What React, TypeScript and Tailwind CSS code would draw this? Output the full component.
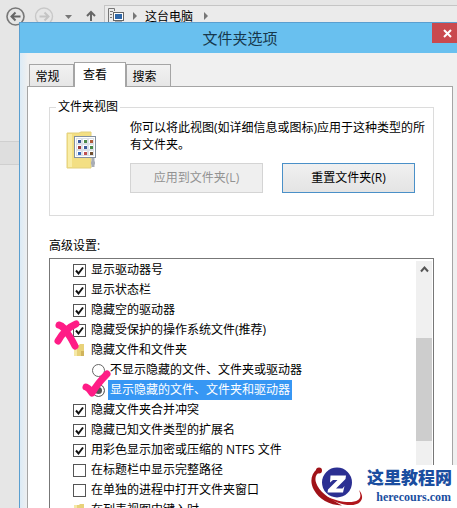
import { useState } from "react";

interface SettingItem {
  id: string;
  label: string;
  kind: "checkbox" | "radio" | "group";
  checked?: boolean;
}

const SETTINGS: SettingItem[] = [
  { id: "drive-letters", label: "显示驱动器号", kind: "checkbox", checked: true },
  { id: "status-bar", label: "显示状态栏", kind: "checkbox", checked: true },
  { id: "empty-drives", label: "隐藏空的驱动器", kind: "checkbox", checked: true },
  { id: "system-files", label: "隐藏受保护的操作系统文件(推荐)", kind: "checkbox", checked: true },
  { id: "hidden-files", label: "隐藏文件和文件夹", kind: "group" },
  { id: "hide", label: "不显示隐藏的文件、文件夹或驱动器", kind: "radio" },
  { id: "show", label: "显示隐藏的文件、文件夹和驱动器", kind: "radio" },
  { id: "merge", label: "隐藏文件夹合并冲突", kind: "checkbox", checked: true },
  { id: "extensions", label: "隐藏已知文件类型的扩展名", kind: "checkbox", checked: true },
  { id: "ntfs", label: "用彩色显示加密或压缩的 NTFS 文件", kind: "checkbox", checked: true },
  { id: "full-path", label: "在标题栏中显示完整路径", kind: "checkbox" },
  { id: "process", label: "在单独的进程中打开文件夹窗口", kind: "checkbox" },
  { id: "typing", label: "在列表视图中键入时", kind: "group" },
];

const TABS = ["常规", "查看", "搜索"];

function ExplorerBar() {
  return (
    <header className="flex h-[22px] items-start">
      <svg width="104" height="28" viewBox="0 0 104 28" fill="none" className="shrink-0">
        <circle cx="15.5" cy="16.5" r="8.5" stroke="#777" strokeWidth="1.6" />
        <path d="M20.5 16.5h-9m4-4-4 4 4 4" stroke="#666" strokeWidth="2" />
        <circle cx="44" cy="16.5" r="8.5" stroke="#c8c8c8" strokeWidth="1.4" />
        <path d="M39.5 16.5h9m-4-4 4 4-4 4" stroke="#c4c4c4" strokeWidth="2" />
        <path d="M65 15h7l-3.5 4z" fill="#777" />
        <path d="M91 21v-9m-4 4 4-4 4 4" stroke="#666" strokeWidth="2" />
      </svg>
      <div className="mt-[5px] flex h-6 grow items-start border-t border-l border-[#c5c5c5] bg-[#ebebeb] pt-px pl-[2px]">
        <svg width="38" height="20" viewBox="0 0 38 20" fill="none" className="shrink-0">
          <path d="M1.5 17V1.500h6V4M1.500 15.500h3M3 4.500h3M3 7.500h2M3 10.500h2" stroke="#777" />
          <rect x="6.500" y="5.500" width="10" height="8" fill="#fff" stroke="#666" />
          <rect x="8" y="7" width="7" height="5" fill="#2f67a8" />
          <path d="M8 15h7" stroke="#666" />
          <path d="M26 5v8l4-4z" fill="#777" />
        </svg>
        <span className="text-xs leading-5 text-black">这台电脑</span>
        <svg width="20" height="20" viewBox="0 0 20 20" className="shrink-0">
          <path d="M11 5v8l4-4z" fill="#777" />
        </svg>
      </div>
    </header>
  );
}

function FolderViewIcon() {
  const colors = ["#3b5a9a", "#4a8a4a", "#b05a3a", "#a03a3a", "#3b5a9a", "#4a8a4a", "#3b6aba", "#c05050", "#705030"];
  return (
    <svg width="34" height="40" viewBox="0 0 34 40" className="shrink-0">
      <path d="M1 2h12l2-1h10v36H1z" fill="#f3df83" stroke="#e3d07c" />
      <path d="M2 3h4v33H2z" fill="#f9eda6" />
      <path d="M27 27v9m-2-4h4" stroke="#a9adb5" strokeWidth="3" />
      <rect x="8.5" y="5.5" width="21" height="21" fill="#fff" stroke="#8290a0" />
      {colors.map((color, i) => (
        <g key={i}>
          <rect x={10.5 + (i % 3) * 6} y={7.5 + Math.floor(i / 3) * 6} width="5" height="5" fill="#fff" stroke="#dbe1e8" />
          <rect x={12 + (i % 3) * 6} y={9 + Math.floor(i / 3) * 6} width="3" height="3" fill={color} />
        </g>
      ))}
    </svg>
  );
}

function FolderViews() {
  return (
    <fieldset className="min-w-0 border border-[#dcdcdc] pb-[22px]">
      <legend className="ml-[6px] px-[2px] text-xs leading-4">文件夹视图</legend>
      <div className="flex pl-4 pr-[7px]">
        <div className="w-16 shrink-0 pt-4">
          <FolderViewIcon />
        </div>
        <div className="min-w-0 grow pt-1">
          <p className="text-xs leading-[17px]">
            你可以将此视图(如详细信息或图标)应用于这种类型的所有文件夹。
          </p>
          <div className="mt-[10px] flex gap-[19px] pr-[11px]">
            <button
              type="button"
              disabled
              className="h-[30px] grow basis-0 border border-[#d4d4d4] bg-[#efefef] text-xs text-[#929292]"
            >
              应用到文件夹(L)
            </button>
            <button
              type="button"
              className="h-[30px] grow basis-0 border border-[#4a90c8] bg-linear-to-b from-[#f0f0f0] to-[#e4e4e4] text-xs"
            >
              重置文件夹(R)
            </button>
          </div>
        </div>
      </div>
    </fieldset>
  );
}

function FolderGlyph() {
  return (
    <svg width="12" height="14" viewBox="0 0 12 14" className="shrink-0">
      <path d="M1 2h5l1-1h4v12H1z" fill="#e8d27a" />
      <path d="M1 2h3v11H1z" fill="#f5e8a6" />
      <path d="M8 8h3v5H8z" fill="#d0b45c" />
    </svg>
  );
}

interface SettingRowProps {
  item: SettingItem;
  checked: boolean;
  onToggle: (item: SettingItem) => void;
}

function SettingRow({ item, checked, onToggle }: SettingRowProps) {
  if (item.kind === "group") {
    return (
      <li className="flex h-5 items-center gap-[6px] pl-[23px]">
        <FolderGlyph />
        <span className="text-xs leading-5">{item.label}</span>
      </li>
    );
  }

  if (item.kind === "radio") {
    return (
      <li className="flex h-5 items-center pl-[42px]">
        <input
          id={item.id}
          type="radio"
          name="hidden-files"
          checked={checked}
          onChange={() => onToggle(item)}
          className="size-[13px] shrink-0 appearance-none rounded-full border border-[#666] bg-white checked:bg-[#555] checked:inset-ring-2 checked:inset-ring-white"
        />
        <label
          htmlFor={item.id}
          className={`ml-[3px] px-[2px] text-xs leading-5 ${checked ? "bg-[#3797f4] text-white" : ""}`}
        >
          {item.label}
        </label>
      </li>
    );
  }

  return (
    <li className="flex h-5 items-center gap-[5px] pl-[23px]">
      <span className="relative flex shrink-0">
        <input
          id={item.id}
          type="checkbox"
          checked={checked}
          onChange={() => onToggle(item)}
          className="size-[13px] appearance-none border border-[#555] bg-white"
        />
        {checked && (
          <svg width="13" height="13" viewBox="0 0 13 13" fill="none" className="pointer-events-none absolute inset-0">
            <path d="M3 6.500 5.500 9.500 10 3.500" stroke="#111" strokeWidth="2" />
          </svg>
        )}
      </span>
      <label htmlFor={item.id} className="text-xs leading-5">
        {item.label}
      </label>
    </li>
  );
}

function AdvancedSettings() {
  const [checkedIds, setCheckedIds] = useState(
    SETTINGS.filter((item) => item.checked).map((item) => item.id)
  );
  const [radioId, setRadioId] = useState("show");

  const toggle = (item: SettingItem) => {
    if (item.kind === "radio") {
      setRadioId(item.id);
      return;
    }
    setCheckedIds((ids) =>
      ids.includes(item.id) ? ids.filter((id) => id !== item.id) : [...ids, item.id]
    );
  };

  return (
    <section className="flex min-h-0 grow flex-col">
      <h2 className="text-xs leading-4">高级设置:</h2>
      <div className="relative mt-1 flex min-h-0 grow border border-b-0 border-[#777]">
        <ul className="min-w-0 grow overflow-hidden pt-px">
          {SETTINGS.map((item) => (
            <SettingRow
              key={item.id}
              item={item}
              checked={item.kind === "radio" ? radioId === item.id : checkedIds.includes(item.id)}
              onToggle={toggle}
            />
          ))}
        </ul>
        <div className="mt-[2px] mr-[1px] flex w-4 shrink-0 flex-col bg-[#f0f0f0]">
          <button type="button" aria-label="向上滚动" className="flex h-[77px] shrink-0 justify-center pt-1">
            <svg width="9" height="8" viewBox="0 0 9 8" fill="none">
              <path d="M1 6.500 4.500 2.500 8 6.500" stroke="#555" strokeWidth="2" />
            </svg>
          </button>
          <div className="h-[103px] shrink-0 bg-[#cdcdcd]" />
        </div>
        {/* hand-drawn cross and tick over the two important options */}
        <svg width="70" height="90" viewBox="0 0 70 90" fill="none" className="pointer-events-none absolute top-[52px] left-0">
          <g stroke="#ff1c86" strokeLinecap="round" strokeLinejoin="round">
            <path d="M9 14c4 1 6 4 9 9 3 4 5 8 7 12" strokeWidth="7" />
            <path d="M26 13c-7 3-13 8-18 17" strokeWidth="7" />
          </g>
        </svg>
        <svg width="40" height="40" viewBox="0 0 40 40" fill="none" className="pointer-events-none absolute top-[110px] left-[30px]">
          <path d="M6 18c3 1 4 3 6 6 4-7 8-12 15-19" stroke="#ff1c86" strokeWidth="7" strokeLinecap="round" strokeLinejoin="round" />
        </svg>
      </div>
    </section>
  );
}

function SiteBadge() {
  return (
    <aside className="absolute right-0 bottom-0 flex h-[43px] items-start bg-white pr-[5px]">
      <svg width="57" height="43" viewBox="0 0 57 43" className="shrink-0">
        <circle cx="27" cy="17.500" r="15" fill="#2b2f92" />
        <path
          d="M20.500 10.500h15.500l-.5 3.500-9.500 9.500h6.500l2-2.500-1.500 6.500H17.500l.5-3 9.500-9.500h-4.500l-3 2.500z"
          fill="#fff"
        />
        <circle cx="9" cy="5.500" r="3" fill="#a01218" />
        <path
          d="M7 4C1 9-.5 17 4 25c5 9 15 15 28 15.500C22 35 12 29 7.500 21 4 15 5 9 10 7z"
          fill="#a01218"
        />
        <path d="M15 31c13 9 29 12 35 6 3-3 3-7-1-12 2 5 2 8-1 10-6 4-20 2-33-4z" fill="#b0161c" />
      </svg>
      <div className="text-[#1b4ea0]">
        <p className="font-['Noto_Sans_CJK_SC'] text-[17px] leading-6 font-black">这里教程网</p>
        <p className="pr-px text-right font-['Liberation_Serif'] text-xs leading-4 font-bold">herecours.com</p>
      </div>
    </aside>
  );
}

export default function App() {
  const [activeTab, setActiveTab] = useState("查看");

  return (
    <div className="relative flex h-screen flex-col overflow-hidden bg-[#e6e6e6] font-['Open_Sans','Noto_Sans_CJK_SC',sans-serif] text-black">
      <ExplorerBar />
      <div className="relative flex min-h-0 grow">
        <div className="flex w-[19px] shrink-0 flex-col pt-[119px]">
          <div className="h-6 border-y border-[#cfcfcf] bg-[#dedede]" />
        </div>
        <main className="flex min-w-0 grow flex-col border-t border-l border-[#5a9fd0] bg-[#f0f0f0]">
          <div className="flex h-[30px] shrink-0 bg-[#69c0ef]">
            <h1 className="grow pl-7 text-center text-[15px] leading-[30px] text-[#17384c]">文件夹选项</h1>
            <button type="button" aria-label="关闭" className="flex h-5 w-[25px] items-center justify-center bg-[#c9494e] pl-[6px]">
              <svg width="9" height="9" viewBox="0 0 9 9" fill="none">
                <path d="m1 1 7 7m0-7-7 7" stroke="#fff" strokeWidth="2" />
              </svg>
            </button>
          </div>
          <div className="flex min-h-0 grow flex-col bg-linear-to-r from-[#dcebf6] to-[#f0f0f0] to-[8px] pt-[9px] pr-1 pl-[7px]">
            <div role="tablist" className="flex h-6 shrink-0 items-end pl-[2px]">
              {TABS.map((tab) => (
                <button
                  key={tab}
                  type="button"
                  role="tab"
                  aria-selected={tab === activeTab}
                  onClick={() => setActiveTab(tab)}
                  className={
                    tab === activeTab
                      ? "z-10 -mb-px h-[25px] w-[52px] border border-b-0 border-[#a5a5a5] bg-white pr-[10px] text-xs"
                      : "h-[22px] w-[45px] border border-b-0 border-[#a5a5a5] bg-linear-to-b from-[#f2f2f2] to-[#e6e6e6] pt-[2px] pr-2 text-xs"
                  }
                >
                  {tab}
                </button>
              ))}
            </div>
            <div className="flex min-h-0 grow flex-col gap-[22px] border border-b-0 border-[#a5a5a5] bg-white px-[18px] pt-3 pl-[21px]">
              <FolderViews />
              <AdvancedSettings />
            </div>
          </div>
        </main>
      </div>
      <SiteBadge />
    </div>
  );
}
